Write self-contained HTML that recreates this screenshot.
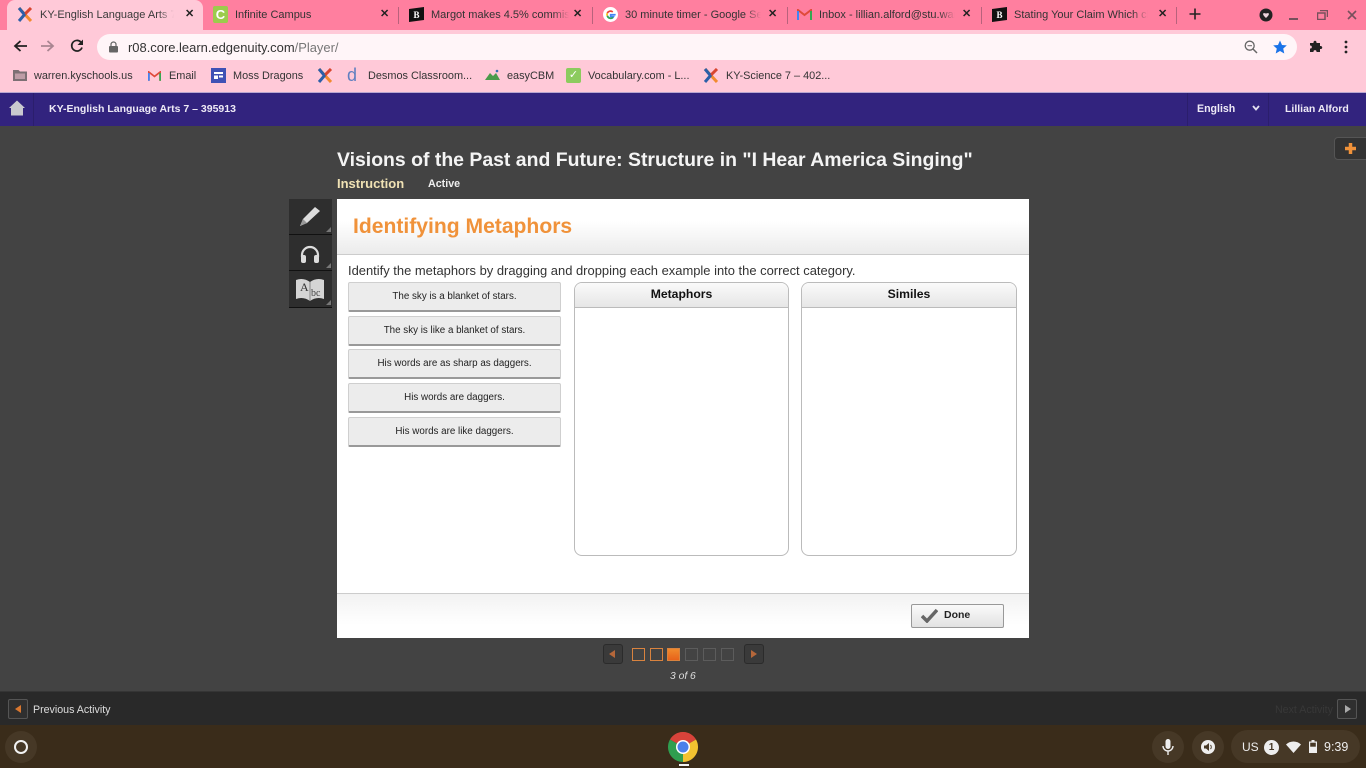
<!DOCTYPE html>
<html><head><meta charset="utf-8"><style>
html,body{margin:0;padding:0;width:1366px;height:768px;overflow:hidden;background:#434343;font-family:"Liberation Sans",sans-serif}
div,span,svg{position:absolute;white-space:nowrap;box-sizing:border-box}
.t{font-size:11px;color:#333;top:8px;line-height:14px;overflow:hidden}
.fade{top:6px;width:16px;height:18px;background:linear-gradient(90deg,rgba(255,127,159,0),#ff7f9f)}
.x{font-size:11px;top:7px;color:#222;font-weight:bold;line-height:15px}
.sep{width:1px;top:7px;height:17px;background:#b8627c}
.b{font-size:10.9px;color:#333;top:69px;line-height:14px}
.item{left:348px;width:213px;height:30px;background:#ececec;border:1px solid #cfcfcf;border-bottom:2px solid #999;border-radius:2px;text-align:center;font-size:9.8px;color:#222;line-height:27px}
.col{top:282px;height:274px;background:#fff;border:1px solid #bbb;border-radius:8px;overflow:hidden}
.colh{left:0;right:0;top:0;height:25px;background:linear-gradient(#fafafa,#e6e6e6);border-bottom:1px solid #bbb;text-align:center;font-weight:bold;font-size:12.2px;color:#111;line-height:22px}
.tool{left:289px;width:43px;height:36px;background:#2e2e2e;border-bottom:1px solid #111}
.cor{right:1px;bottom:2px;width:0;height:0;border-left:5px solid transparent;border-bottom:5px solid #777}
.sq{top:648px;width:13px;height:13px;border:1px solid #5c5c5c}
.nav{top:644px;width:20px;height:20px;background:#3a3a3a;border:1px solid #2b2b2b;border-radius:3px}
.hd{top:102px;font-size:10.6px;font-weight:bold;color:#eeeaf6;line-height:14px}
</style></head><body>
<!-- tab strip -->
<div style="left:0;top:0;width:1366px;height:30px;background:#ff7f9f"></div>
<div style="left:7px;top:0;width:196px;height:30px;background:#ffc9d8;border-radius:8px 8px 0 0"></div>
<svg style="left:17px;top:7px" width="16" height="15" viewBox="0 0 16 15"><path d="M2 1L14 14" stroke="#f28a2e" stroke-width="3"/><path d="M14 1L8 7" stroke="#d8452f" stroke-width="3"/><path d="M2 14L8 7" stroke="#2c5fa8" stroke-width="3"/><path d="M2 1L7 7" stroke="#2c5fa8" stroke-width="3"/></svg>
<div class="t" style="left:40px;width:134px;color:#3a3a3a">KY-English Language Arts 7 – 395913</div>
<div class="fade" style="left:158px;width:16px;background:linear-gradient(90deg,rgba(255,201,216,0),#ffc9d8)"></div>
<div class="x" style="left:185px">✕</div>
<div style="left:213px;top:6px;width:15px;height:17px;background:#9ccb4c;border-radius:2px;color:#fff;font-weight:bold;font-size:13px;line-height:17px;text-align:center">C</div>
<div class="t" style="left:235px;width:130px">Infinite Campus</div>
<div class="x" style="left:380px">✕</div>
<div class="sep" style="left:398px"></div>
<svg style="left:409px;top:7px" width="15" height="15" viewBox="0 0 15 15"><path d="M0 2L15 0V13L0 15Z" fill="#111"/><text x="4.5" y="11" font-size="9" font-weight="bold" fill="#fff" font-family="Liberation Serif">B</text></svg>
<div class="t" style="left:431px;width:138px">Margot makes 4.5% commission</div>
<div class="fade" style="left:553px"></div>
<div class="x" style="left:573px">✕</div>
<div class="sep" style="left:592px"></div>
<svg style="left:603px;top:7px" width="15" height="15" viewBox="0 0 16 16"><circle cx="8" cy="8" r="8" fill="#fff"/><path d="M13.5 8.2H8.2v2h3a3.4 3.4 0 0 1-6.4-1" fill="none" stroke="#4285f4" stroke-width="1.8"/><path d="M4.6 9.5a3.6 3.6 0 0 0 6 1.5" fill="none" stroke="#34a853" stroke-width="1.8"/><path d="M4.5 9.3a3.6 3.6 0 0 1 0-2.6" fill="none" stroke="#fbbc05" stroke-width="1.8"/><path d="M4.6 6.6a3.7 3.7 0 0 1 5.8-1.3" fill="none" stroke="#ea4335" stroke-width="1.8"/></svg>
<div class="t" style="left:625px;width:136px">30 minute timer - Google Search</div>
<div class="fade" style="left:745px"></div>
<div class="x" style="left:768px">✕</div>
<div class="sep" style="left:787px"></div>
<svg style="left:797px;top:9px" width="15" height="11" viewBox="0 0 15 11"><path d="M1 11V1L7.5 6 14 1V11" fill="none" stroke="#e04a3a" stroke-width="2"/><path d="M1 11V2" stroke="#4285f4" stroke-width="2"/><path d="M14 11V2" stroke="#34a853" stroke-width="2"/></svg>
<div class="t" style="left:819px;width:136px">Inbox - lillian.alford@stu.warren</div>
<div class="fade" style="left:939px"></div>
<div class="x" style="left:962px">✕</div>
<div class="sep" style="left:981px"></div>
<svg style="left:992px;top:7px" width="15" height="15" viewBox="0 0 15 15"><path d="M0 2L15 0V13L0 15Z" fill="#111"/><text x="4.5" y="11" font-size="9" font-weight="bold" fill="#fff" font-family="Liberation Serif">B</text></svg>
<div class="t" style="left:1014px;width:134px">Stating Your Claim Which claim</div>
<div class="fade" style="left:1132px"></div>
<div class="x" style="left:1158px">✕</div>
<div class="sep" style="left:1176px"></div>
<svg style="left:1189px;top:8px" width="12" height="12" viewBox="0 0 12 12"><path d="M6 .5V11.5M.5 6H11.5" stroke="#222" stroke-width="1.6"/></svg>
<svg style="left:1259px;top:8px" width="14" height="14" viewBox="0 0 14 14"><circle cx="7" cy="7" r="6.5" fill="#222"/><path d="M4 5.5C5.5 4.8 6.3 5 7 5.7 7.7 5 8.5 4.8 10 5.5 10 7.5 8 9 7 10 6 9 4 7.5 4 5.5Z" fill="#eed5dc"/></svg>
<div style="left:1289px;top:18px;width:9px;height:1.5px;background:#77505c"></div>
<svg style="left:1317px;top:10px" width="11" height="10" viewBox="0 0 11 10"><path d="M3 .5H10.5V7M.5 3H8V9.5H.5Z" fill="none" stroke="#77505c" stroke-width="1.5"/></svg>
<svg style="left:1347px;top:10px" width="10" height="10" viewBox="0 0 10 10"><path d="M1 1L9 9M9 1L1 9" stroke="#77505c" stroke-width="1.6"/></svg>

<!-- toolbar -->
<div style="left:0;top:30px;width:1366px;height:63px;background:#ffc9d8;border-bottom:1px solid #b9a6d0"></div>
<svg style="left:13px;top:39px" width="14" height="14" viewBox="0 0 14 14"><path d="M14 7H3M7.5 2L2 7l5.5 5" fill="none" stroke="#222" stroke-width="1.8"/></svg>
<svg style="left:41px;top:39px" width="14" height="14" viewBox="0 0 14 14"><path d="M0 7H11M6.5 2L12 7l-5.5 5" fill="none" stroke="#a98591" stroke-width="1.8"/></svg>
<svg style="left:70px;top:39px" width="14" height="14" viewBox="0 0 14 14"><path d="M12 8.5A5.3 5.3 0 1 1 10.8 3" fill="none" stroke="#222" stroke-width="1.7"/><path d="M13 .5V6H7.5Z" fill="#222"/></svg>
<div style="left:97px;top:34px;width:1200px;height:26px;background:#fff5f8;border-radius:13px"></div>
<svg style="left:109px;top:41px" width="9" height="12" viewBox="0 0 9 12"><path d="M2 5V3.5a2.5 2.5 0 0 1 5 0V5" fill="none" stroke="#666" stroke-width="1.2"/><rect y="5" width="9" height="6.5" rx="1" fill="#666"/></svg>
<div style="left:128px;top:40px;font-size:12.95px;line-height:15px;color:#333">r08.core.learn.edgenuity.com<span style="position:static;color:#777">/Player/</span></div>
<svg style="left:1244px;top:40px" width="14" height="14" viewBox="0 0 14 14"><circle cx="5.7" cy="5.7" r="4.5" fill="none" stroke="#666" stroke-width="1.3"/><path d="M9 9L13 13" stroke="#666" stroke-width="1.5"/><path d="M3.5 5.7H8" stroke="#666"/></svg>
<svg style="left:1273px;top:40px" width="14" height="14" viewBox="0 0 14 14"><path d="M7 .5L9 5l4.8.4-3.6 3.2 1.1 4.9L7 11l-4.3 2.5 1.1-4.9L.2 5.4 5 5Z" fill="#1a73e8"/></svg>
<svg style="left:1309px;top:39px" width="14" height="14" viewBox="0 0 14 14"><path d="M1 4H4.5C4 1 8 1 7.5 4H11V7C14 6.5 14 10.5 11 10V13H7.5C8 10.5 4 10.5 4.5 13H1V9.5C3.5 10 3.5 6 1 6.5Z" fill="#222"/></svg>
<svg style="left:1344px;top:40px" width="4" height="14" viewBox="0 0 4 14"><circle cx="2" cy="2" r="1.4" fill="#222"/><circle cx="2" cy="7" r="1.4" fill="#222"/><circle cx="2" cy="12" r="1.4" fill="#222"/></svg>

<!-- bookmarks -->
<svg style="left:13px;top:69px" width="14" height="12" viewBox="0 0 14 12"><path d="M0 1H5.5L7 2.5H14V12H0Z" fill="#7d6f74"/><rect x="2" y="4.5" width="10" height="5.5" fill="#ffc9d8" opacity=".5"/></svg>
<div class="b" style="left:34px">warren.kyschools.us</div>
<svg style="left:148px;top:71px" width="13" height="10" viewBox="0 0 15 11"><path d="M1 11V1L7.5 6 14 1V11" fill="none" stroke="#e04a3a" stroke-width="2"/><path d="M1 11V2" stroke="#4285f4" stroke-width="2"/><path d="M14 11V2" stroke="#34a853" stroke-width="2"/></svg>
<div class="b" style="left:169px">Email</div>
<svg style="left:211px;top:68px" width="15" height="15" viewBox="0 0 15 15"><rect width="15" height="15" fill="#3f51b5"/><path d="M3 4H12V6H3ZM3 7.5H7V11H3ZM8 7.5H12V9.5H8Z" fill="#fff"/></svg>
<div class="b" style="left:233px">Moss Dragons</div>
<svg style="left:317px;top:68px" width="16" height="15" viewBox="0 0 16 15"><path d="M2 1L14 14" stroke="#f28a2e" stroke-width="3"/><path d="M14 1L8 7" stroke="#d8452f" stroke-width="3"/><path d="M2 14L8 7" stroke="#2c5fa8" stroke-width="3"/><path d="M2 1L7 7" stroke="#2c5fa8" stroke-width="3"/></svg>
<div style="left:347px;top:65px;font-size:18px;line-height:20px;color:#5f7fc0">d</div>
<div class="b" style="left:368px">Desmos Classroom...</div>
<svg style="left:485px;top:69px" width="15" height="12" viewBox="0 0 15 12"><path d="M0 11L5 4l3 3 3-3 4 7Z" fill="#4a9a4a"/><circle cx="12" cy="2" r="1.3" fill="#3a6fb0"/></svg>
<div class="b" style="left:507px">easyCBM</div>
<div style="left:566px;top:68px;width:15px;height:15px;background:#8ccb5e;border-radius:2px;color:#fff;font-size:11px;line-height:15px;text-align:center">✓</div>
<div class="b" style="left:588px">Vocabulary.com - L...</div>
<svg style="left:703px;top:68px" width="16" height="15" viewBox="0 0 16 15"><path d="M2 1L14 14" stroke="#f28a2e" stroke-width="3"/><path d="M14 1L8 7" stroke="#d8452f" stroke-width="3"/><path d="M2 14L8 7" stroke="#2c5fa8" stroke-width="3"/><path d="M2 1L7 7" stroke="#2c5fa8" stroke-width="3"/></svg>
<div class="b" style="left:726px">KY-Science 7 – 402...</div>

<!-- purple header -->
<div style="left:0;top:93px;width:1366px;height:33px;background:#32237e"></div>
<div style="left:33px;top:93px;width:1px;height:33px;background:#2b1e6c"></div>
<div style="left:1187px;top:93px;width:1px;height:33px;background:#2b1e6c"></div>
<div style="left:1268px;top:93px;width:1px;height:33px;background:#2b1e6c"></div>
<svg style="left:9px;top:100px" width="16" height="16" viewBox="0 0 16 16"><path d="M8 .5L16 8H14V15.5H2V8H0Z" fill="#c9c9cf"/></svg>
<div class="hd" style="left:49px;font-size:10.5px">KY-English Language Arts 7 – 395913</div>
<div class="hd" style="left:1197px">English</div>
<svg style="left:1252px;top:105px" width="8" height="6" viewBox="0 0 8 6"><path d="M1 1L4 4.5 7 1" fill="none" stroke="#e4e0f0" stroke-width="1.8"/></svg>
<div class="hd" style="left:1285px;font-size:10.5px">Lillian Alford</div>

<!-- plus tab -->
<div style="left:1334px;top:137px;width:40px;height:23px;background:#333;border:1px solid #555;border-radius:4px"></div>
<svg style="left:1344px;top:142px" width="13" height="13" viewBox="0 0 13 13"><path d="M6.5 1V12M1 6.5H12" stroke="#f0923a" stroke-width="3.5"/></svg>

<!-- titles -->
<div style="left:337px;top:149px;font-size:19.43px;font-weight:bold;color:#f4f4f4;line-height:23px">Visions of the Past and Future: Structure in "I Hear America Singing"</div>
<div style="left:337px;top:176px;font-size:13px;font-weight:bold;color:#f0e2b4;line-height:16px">Instruction</div>
<div style="left:428px;top:177px;font-size:10.7px;font-weight:bold;color:#eee;line-height:15px">Active</div>

<!-- tools -->
<div class="tool" style="top:199px"><div class="cor"></div></div>
<div class="tool" style="top:235px"><div class="cor"></div></div>
<div class="tool" style="top:271px;height:37px"><div class="cor"></div></div>
<svg style="left:299px;top:206px" width="22" height="21" viewBox="0 0 22 21"><path d="M16 1L21 5 8 17 1 20 4 13Z" fill="#ddd"/><path d="M4 13L8 17 1 20Z" fill="#999"/></svg>
<svg style="left:299px;top:245px" width="22" height="18" viewBox="0 0 22 18"><path d="M3 12V10a8 8 0 0 1 16 0v2" fill="none" stroke="#ddd" stroke-width="2.2"/><rect x="2" y="10" width="5" height="8" rx="2" fill="#ddd"/><rect x="15" y="10" width="5" height="8" rx="2" fill="#ddd"/></svg>
<svg style="left:295px;top:278px" width="30" height="24" viewBox="0 0 30 24"><path d="M1 2C6 0 11 1 15 4 19 1 24 0 29 2V21C24 19 19 20 15 23 11 20 6 19 1 21Z" fill="#d5d5d5"/><path d="M15 4V23" stroke="#888"/><text x="5" y="13" font-size="12" fill="#333" font-family="Liberation Serif">A</text><text x="16" y="18" font-size="10" fill="#444" font-family="Liberation Serif">bc</text></svg>

<!-- main card -->
<div style="left:337px;top:199px;width:692px;height:439px;background:#fff"></div>
<div style="left:337px;top:199px;width:692px;height:56px;background:linear-gradient(#fff 40%,#ebebeb);border-bottom:1px solid #ccc"></div>
<div style="left:353px;top:214px;font-size:21.1px;font-weight:bold;color:#f0923a;line-height:26px">Identifying Metaphors</div>
<div style="left:348px;top:263px;font-size:12.95px;color:#333;line-height:15px">Identify the metaphors by dragging and dropping each example into the correct category.</div>

<div class="item" style="top:282px">The sky is a blanket of stars.</div>
<div class="item" style="top:316px">The sky is like a blanket of stars.</div>
<div class="item" style="top:349px">His words are as sharp as daggers.</div>
<div class="item" style="top:383px">His words are daggers.</div>
<div class="item" style="top:417px">His words are like daggers.</div>

<div class="col" style="left:574px;width:215px"><div class="colh">Metaphors</div></div>
<div class="col" style="left:801px;width:216px"><div class="colh">Similes</div></div>

<div style="left:337px;top:593px;width:692px;height:45px;background:linear-gradient(#f2f2f2,#fff 70%);border-top:1px solid #ccc"></div>
<div style="left:911px;top:604px;width:93px;height:24px;background:linear-gradient(#fafafa,#e2e2e2);border:1px solid #999;border-radius:2px"></div>
<svg style="left:921px;top:607px" width="17" height="16" viewBox="0 0 17 16"><path d="M1 9L6 14 16 3" fill="none" stroke="#666" stroke-width="3.5"/></svg>
<div style="left:944px;top:608px;font-size:10.5px;font-weight:bold;color:#222;line-height:15px">Done</div>

<!-- pager -->
<div class="nav" style="left:603px"></div>
<svg style="left:609px;top:650px" width="6" height="8" viewBox="0 0 6 8"><path d="M6 0V8L0 4Z" fill="#b5673a"/></svg>
<div class="sq" style="left:632px;border-color:#d9833f"></div>
<div class="sq" style="left:650px;border-color:#d9833f"></div>
<div class="sq" style="left:667px;border-color:#d9833f;background:linear-gradient(#f08a2c,#e8621a)"></div>
<div class="sq" style="left:685px"></div>
<div class="sq" style="left:703px"></div>
<div class="sq" style="left:721px"></div>
<div class="nav" style="left:744px"></div>
<svg style="left:751px;top:650px" width="6" height="8" viewBox="0 0 6 8"><path d="M0 0V8L6 4Z" fill="#b5673a"/></svg>
<div style="left:670px;top:670px;font-size:10.3px;font-style:italic;color:#ddd;line-height:14px">3 of 6</div>

<!-- footer -->
<div style="left:0;top:691px;width:1366px;height:35px;background:#292929;border-top:1px solid #353535"></div>
<div style="left:8px;top:699px;width:20px;height:20px;background:#2f2f2f;border:1px solid #555;border-radius:2px"></div>
<svg style="left:15px;top:705px" width="6" height="8" viewBox="0 0 6 8"><path d="M6 0V8L0 4Z" fill="#d9772f"/></svg>
<div style="left:33px;top:703px;font-size:10.65px;color:#ddd;line-height:14px">Previous Activity</div>
<div style="left:1275px;top:703px;font-size:10.65px;color:#383838;line-height:14px">Next Activity</div>
<div style="left:1337px;top:699px;width:20px;height:20px;background:#2f2f2f;border:1px solid #555;border-radius:2px"></div>
<svg style="left:1345px;top:705px" width="6" height="8" viewBox="0 0 6 8"><path d="M0 0V8L6 4Z" fill="#aaa"/></svg>

<!-- shelf -->
<div style="left:0;top:725px;width:1366px;height:43px;background:#3a2c1a"></div>
<div style="left:5px;top:731px;width:32px;height:32px;border-radius:50%;background:#463826"></div>
<div style="left:14px;top:740px;width:14px;height:14px;border-radius:50%;border:2px solid #f2f2f2"></div>
<svg style="left:668px;top:732px" width="30" height="30" viewBox="0 0 30 30"><path d="M15 15L2 7.5A15 15 0 0 1 28 7.5Z" fill="#d8433a"/><path d="M15 15L28 7.5A15 15 0 0 1 15 30Z" fill="#f2c230"/><path d="M15 15L15 30A15 15 0 0 1 2 7.5Z" fill="#2f9e4f"/><circle cx="15" cy="15" r="7" fill="#fff"/><circle cx="15" cy="15" r="5.5" fill="#4a80ea"/></svg>
<div style="left:679px;top:764px;width:10px;height:2px;background:#f2f2f2"></div>
<div style="left:1152px;top:731px;width:32px;height:32px;border-radius:50%;background:#463826"></div>
<svg style="left:1162px;top:739px" width="12" height="16" viewBox="0 0 12 16"><rect x="3.5" y="0" width="5" height="10" rx="2.5" fill="#eee"/><path d="M1 7a5 5 0 0 0 10 0M6 12V16" fill="none" stroke="#eee" stroke-width="1.4"/></svg>
<div style="left:1192px;top:731px;width:32px;height:32px;border-radius:50%;background:#463826"></div>
<svg style="left:1201px;top:740px" width="14" height="14" viewBox="0 0 14 14"><circle cx="7" cy="7" r="7" fill="#eee"/><path d="M3 5.5H5L8 3V11L5 8.5H3Z" fill="#463826"/><path d="M9.5 5a3 3 0 0 1 0 4" fill="none" stroke="#463826"/></svg>
<div style="left:1231px;top:730px;width:129px;height:33px;border-radius:17px;background:#463826"></div>
<div style="left:1242px;top:740px;font-size:12px;color:#eee;line-height:15px">US</div>
<div style="left:1264px;top:740px;width:15px;height:15px;border-radius:50%;background:#eee;color:#463826;font-size:10px;font-weight:bold;line-height:15px;text-align:center">1</div>
<svg style="left:1286px;top:741px" width="15" height="12" viewBox="0 0 15 12"><path d="M0 3.5C4 -.5 11 -.5 15 3.5L7.5 12Z" fill="#eee"/></svg>
<svg style="left:1309px;top:740px" width="8" height="13" viewBox="0 0 8 13"><path d="M2.5 0H5.5V1.5H8V13H0V1.5H2.5Z" fill="#eee"/><rect x="1.2" y="2.7" width="5.6" height="4" fill="#463826"/></svg>
<div style="left:1324px;top:740px;font-size:12.5px;color:#eee;line-height:15px">9:39</div>
</body></html>
